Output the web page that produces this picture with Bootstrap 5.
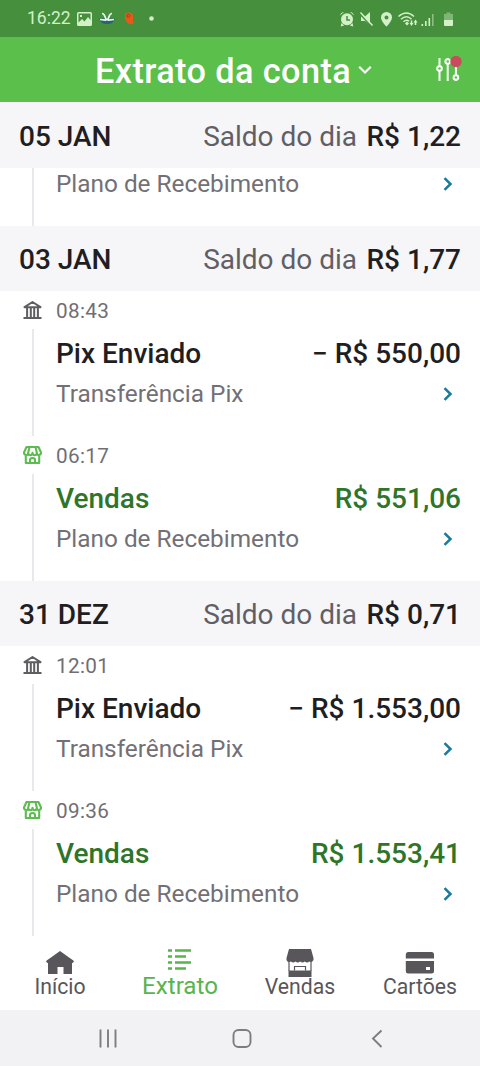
<!DOCTYPE html>
<html lang="pt-BR">
<head>
<meta charset="utf-8">
<meta name="viewport" content="width=device-width, initial-scale=1">
<title>Extrato da conta</title>
<link href="https://cdn.jsdelivr.net/npm/bootstrap@5.3.0/dist/css/bootstrap.min.css" rel="stylesheet">
<style>
body{font-family:Roboto,"Liberation Sans",sans-serif;color:#1f1e22;background:#fff;height:1066px;overflow:hidden;line-height:1}
svg{display:block;flex:none}
.status-bar{height:37px;background:#468f3c;color:#d3f0c9;padding:0 25px 0 27px}
.clock{font-size:17.5px;width:50px;white-space:nowrap}
.title-bar{height:65px;flex:none;background:#5bbf4c;color:#fff}
.title-bar h1{font-size:34.3px;font-weight:500;line-height:40px;letter-spacing:.4px;margin:3px 0 0 95px;white-space:nowrap}
.day-head{height:65px;background:#f6f5f8;padding:3px 19px 0;font-size:28px;white-space:nowrap}
.day-head.first{height:66px;padding-top:3px}
.day-head b{font-weight:500}
.day-head .label{color:#615f64;margin-right:2.500px}
.entry{height:145px;padding-left:22px}
.entry.cut{height:58px}
.rail{width:21px}
.rail .line{width:2px;background:#e9e8ec;margin-left:10px}
.entry-body{margin-left:13px;padding-right:19px;white-space:nowrap}
.hour{font-size:20.7px;line-height:24px;margin-top:8px;color:#706e73;letter-spacing:.35px}
.what{font-size:28px;line-height:32px;font-weight:500;margin-top:15px}
.detail{font-size:24.35px;line-height:30px;margin-top:9px;color:#727075}
.cut .detail{margin-top:1px}
.income{color:#2f7529}
.tabs{height:74px;background:#fff}
.tab{width:120px;color:#58565a;font-size:21.2px}
.tab .ico{height:27px;margin-top:13px;overflow:visible}
.tab.on{color:#58b54c;font-size:24.2px}
.tab.on .ico{height:25px}
.sys{height:56px;background:#f2f1f3}
</style>
</head>
<body class="d-flex flex-column">
<svg width="0" height="0" class="position-absolute" aria-hidden="true">
<defs>
<symbol id="bank" viewBox="0 0 20 20"><g fill="none" stroke="#5f5d62" stroke-width="2" stroke-linejoin="round"><path d="M1 18h18M2 7.200h16L10 2zM4.600 7.500v10M15.400 7.500v10M8.300 8v9.500M11.700 8v9.500"/></g></symbol>
<symbol id="shop" viewBox="0 0 20 20"><g fill="none" stroke="#5dbb50" stroke-width="2.100" stroke-linejoin="round" stroke-linecap="round"><path d="M4 2h12l2.500 5.500c0 3.300-4.200 3.300-4.200.2 0 3.300-4.300 3.300-4.300 0 0 3.300-4.300 3.300-4.300 0 0 3.100-4.200 3.100-4.200-.2zM7 2.200 5.700 7.500M13 2.200l1.300 5.300M3.300 10.500V18h13.400v-7.500M7.500 17.800v-2.600c0-3 5-3 5 0v2.600"/></g></symbol>
<symbol id="go" viewBox="0 0 10 14"><path d="M1.500 1.200 7.500 7l-6 5.800" fill="none" stroke="#167b9f" stroke-width="2.500"/></symbol>
</defs>
</svg>

<div class="status-bar d-flex align-items-center flex-shrink-0">
<div class="clock">16:22</div>
<svg width="15" height="14" viewBox="0 0 15 14"><path fill="#d3f0c9" fill-rule="evenodd" d="M1.500 0h12Q15 0 15 1.500v11Q15 14 13.500 14h-12Q0 14 0 12.500v-11Q0 0 1.500 0zM1.500 1.500v9L5 7l2.500 2.500L11 5l2.500 3V1.500zM3 3h2v2H3z"/></svg>
<svg width="16" height="13" viewBox="0 0 16 13" style="margin-left:7px"><path d="M0 6.500h16Q14.500 12 8 12T0 6.500z" fill="#27666a"/><path d="M3 1.500c3 0 2.500 3.500 4 5.500M13 1.500c-3 0-2.500 3.500-4 5.500M1 7.500l5.500.6L8 7.500l1.500.6 5.500-.6" fill="none" stroke="#ecf7f2" stroke-width="1.700"/></svg>
<svg width="11" height="14" viewBox="0 0 11 14" style="margin-left:9px"><path d="M1 2c2-2 7-2 8 1v7l1 1-3 1.500-3-1-2-2.500L1 7z" fill="#e35b1b"/><circle cx="4.300" cy="3.800" r="1.500" fill="none" stroke="#a43e18"/></svg>
<svg width="5" height="5" style="margin-left:14px"><circle cx="2.500" cy="2.500" r="2.300" fill="#d3f0c9"/></svg>
<svg class="ms-auto" width="116" height="18" viewBox="0 0 116 18"><g fill="#d3f0c9">
<circle cx="8" cy="9.300" r="6"/><path d="M2.500 13l-.8 3.500 3.500-1zM13.500 13l.8 3.500-3.500-1zM1 5.500Q2 2 5 2zM15 5.500Q14 2 11 2z"/>
<path d="M22 6.500h4l5-4.500v13l-5-4h-4z"/>
<path fill-rule="evenodd" d="M47.500 2a5.400 5.400 0 0 0-5.500 5.500c0 4 5.500 9 5.500 9S53 11.500 53 7.500A5.400 5.400 0 0 0 47.500 2zm0 3.500a2 2 0 1 1 0 4 2 2 0 0 1 0-4z"/>
<path d="M66 13.500l2-2 2 2-2 2zM70.500 13h1.200v-2.500h1.600V13h1.200l-2 3zM74.500 12.500l2-3 2 3h-1.200V15h-1.600v-2.500z"/>
<path d="M82.500 14h1.600v2h-1.600zM86 11h1.600v5H86zM89.500 8h1.600v8h-1.600z"/><path opacity=".5" d="M93 4h1.600v12H93z"/>
<path opacity=".4" d="M105 4h2.500V2.500h4V4h2.500v6h-9z"/><path d="M105 10h9v5q0 1-1 1h-7q-1 0-1-1z"/></g>
<g fill="none" stroke="#468f3c" stroke-width="1.500"><path d="M8 6v4h3M20.500 3.500l12 13"/></g>
<g fill="none" stroke="#d3f0c9" stroke-width="1.500"><path d="M21.500 2.500l12 13M59.500 6.500q8-7 15.500 0M62 9.200q5.500-5 10.500 0M64.500 11.800q3-2.800 5.500-.5"/></g></svg>
</div>

<header class="title-bar d-flex align-items-center">
<h1>Extrato da conta</h1>
<svg width="14" height="10" viewBox="0 0 14 10" style="margin:0 0 0 7px"><path d="M1.200 1.800 7 7.500l5.800-5.700" fill="none" stroke="#fff" stroke-width="2.200"/></svg>
<svg class="ms-auto" width="28" height="28" viewBox="0 0 28 28" style="margin:0 18px 1px 0"><g fill="#5bbf4c" stroke="#fff" stroke-width="2"><path d="M5.500 3v23M13.700 3v23M21.900 3v23"/><circle cx="5.500" cy="13.500" r="2.300"/><circle cx="13.700" cy="6.500" r="2.300"/><circle cx="21.900" cy="22.500" r="2.300"/></g><circle cx="22" cy="6.500" r="5.700" fill="#c94b5d"/></svg>
</header>

<section>
<div class="day-head first d-flex align-items-center justify-content-between"><b>05 JAN</b><div><span class="label">Saldo do dia</span> <b>R$ 1,22</b></div></div>
<div class="entry cut d-flex"><div class="rail d-flex"><div class="line"></div></div>
<div class="entry-body flex-grow-1"><div class="detail d-flex justify-content-between align-items-center"><span>Plano de Recebimento</span><svg class="me-2" width="10" height="14"><use href="#go"/></svg></div></div></div>
</section>

<section>
<div class="day-head d-flex align-items-center justify-content-between"><b>03 JAN</b><div><span class="label">Saldo do dia</span> <b>R$ 1,77</b></div></div>
<div class="entry d-flex"><div class="rail d-flex flex-column"><svg width="21" height="20" style="margin:9px 0"><use href="#bank"/></svg><div class="line flex-grow-1"></div></div>
<div class="entry-body flex-grow-1"><div class="hour">08:43</div><div class="what d-flex justify-content-between"><span>Pix Enviado</span><span>− R$ 550,00</span></div><div class="detail d-flex justify-content-between align-items-center"><span>Transferência Pix</span><svg class="me-2" width="10" height="14"><use href="#go"/></svg></div></div></div>
<div class="entry d-flex"><div class="rail d-flex flex-column"><svg width="21" height="20" style="margin:9px 0"><use href="#shop"/></svg><div class="line flex-grow-1"></div></div>
<div class="entry-body flex-grow-1"><div class="hour">06:17</div><div class="what income d-flex justify-content-between"><span>Vendas</span><span>R$ 551,06</span></div><div class="detail d-flex justify-content-between align-items-center"><span>Plano de Recebimento</span><svg class="me-2" width="10" height="14"><use href="#go"/></svg></div></div></div>
</section>

<section>
<div class="day-head d-flex align-items-center justify-content-between"><b>31 DEZ</b><div><span class="label">Saldo do dia</span> <b>R$ 0,71</b></div></div>
<div class="entry d-flex"><div class="rail d-flex flex-column"><svg width="21" height="20" style="margin:9px 0"><use href="#bank"/></svg><div class="line flex-grow-1"></div></div>
<div class="entry-body flex-grow-1"><div class="hour">12:01</div><div class="what d-flex justify-content-between"><span>Pix Enviado</span><span>− R$ 1.553,00</span></div><div class="detail d-flex justify-content-between align-items-center"><span>Transferência Pix</span><svg class="me-2" width="10" height="14"><use href="#go"/></svg></div></div></div>
<div class="entry d-flex"><div class="rail d-flex flex-column"><svg width="21" height="20" style="margin:9px 0"><use href="#shop"/></svg><div class="line flex-grow-1"></div></div>
<div class="entry-body flex-grow-1"><div class="hour">09:36</div><div class="what income d-flex justify-content-between"><span>Vendas</span><span>R$ 1.553,41</span></div><div class="detail d-flex justify-content-between align-items-center"><span>Plano de Recebimento</span><svg class="me-2" width="10" height="14"><use href="#go"/></svg></div></div></div>
</section>

<nav class="tabs d-flex flex-shrink-0">
<div class="tab d-flex flex-column align-items-center"><svg class="ico" width="30" height="27" viewBox="0 0 30 27"><path fill="#58565a" d="M15 2 29 12l-1 2-1-.2V25h-8.500v-7h-6v7H3V13.800l-1 .2-1-2z"/></svg><span>Início</span></div>
<div class="tab on d-flex flex-column align-items-center"><svg class="ico" width="26" height="25" viewBox="0 0 26 25"><path d="M1 1.500h4M8 1.500h16M1 7.500h4M8 7.500h11M1 13.500h4M8 13.500h16M1 19.500h4M8 19.500h11" stroke="#58b54c" stroke-width="2.400" fill="none"/></svg><span>Extrato</span></div>
<div class="tab d-flex flex-column align-items-center"><svg class="ico" width="30" height="27" viewBox="0 0 30 27"><path fill="#58565a" d="M4 0h22l2.500 9v2q-1.500 3-4 1.500-2.500 2-4.700 0-2.300 2-4.600 0-2.400 2-4.700 0-2.200 2-4.700 0Q2.500 14 1.500 11V9zM3.500 21.500h23V28h-23z"/><path d="M4 12v10M26 12v10M9.500 21.500v-4h11v4" fill="none" stroke="#58565a" stroke-width="1.200"/></svg><span>Vendas</span></div>
<div class="tab d-flex flex-column align-items-center"><svg class="ico" width="30" height="27" viewBox="0 0 30 27"><path fill="#58565a" fill-rule="evenodd" d="M3 3h23.500q2.500 0 2.500 2.500v4H.8v-4Q.8 3 3 3zM.8 12H29v10q0 2.500-2.500 2.500H3Q.8 24.500.8 22zM21 18v3h4v-3z"/></svg><span>Cartões</span></div>
</nav>
<div class="sys d-flex align-items-center flex-shrink-0">
<svg width="480" height="56" viewBox="0 0 480 56" fill="none" stroke="#7e7c80" stroke-width="1.900"><path d="M100.500 19.500v18M108 19.500v18M115.500 19.500v18M381.500 20.500 373 28.500l8.500 8.500"/><rect x="233.500" y="20" width="17" height="17" rx="5"/></svg>
</div>
<script src="https://cdn.jsdelivr.net/npm/bootstrap@5.3.0/dist/js/bootstrap.bundle.min.js"></script>
</body>
</html>
